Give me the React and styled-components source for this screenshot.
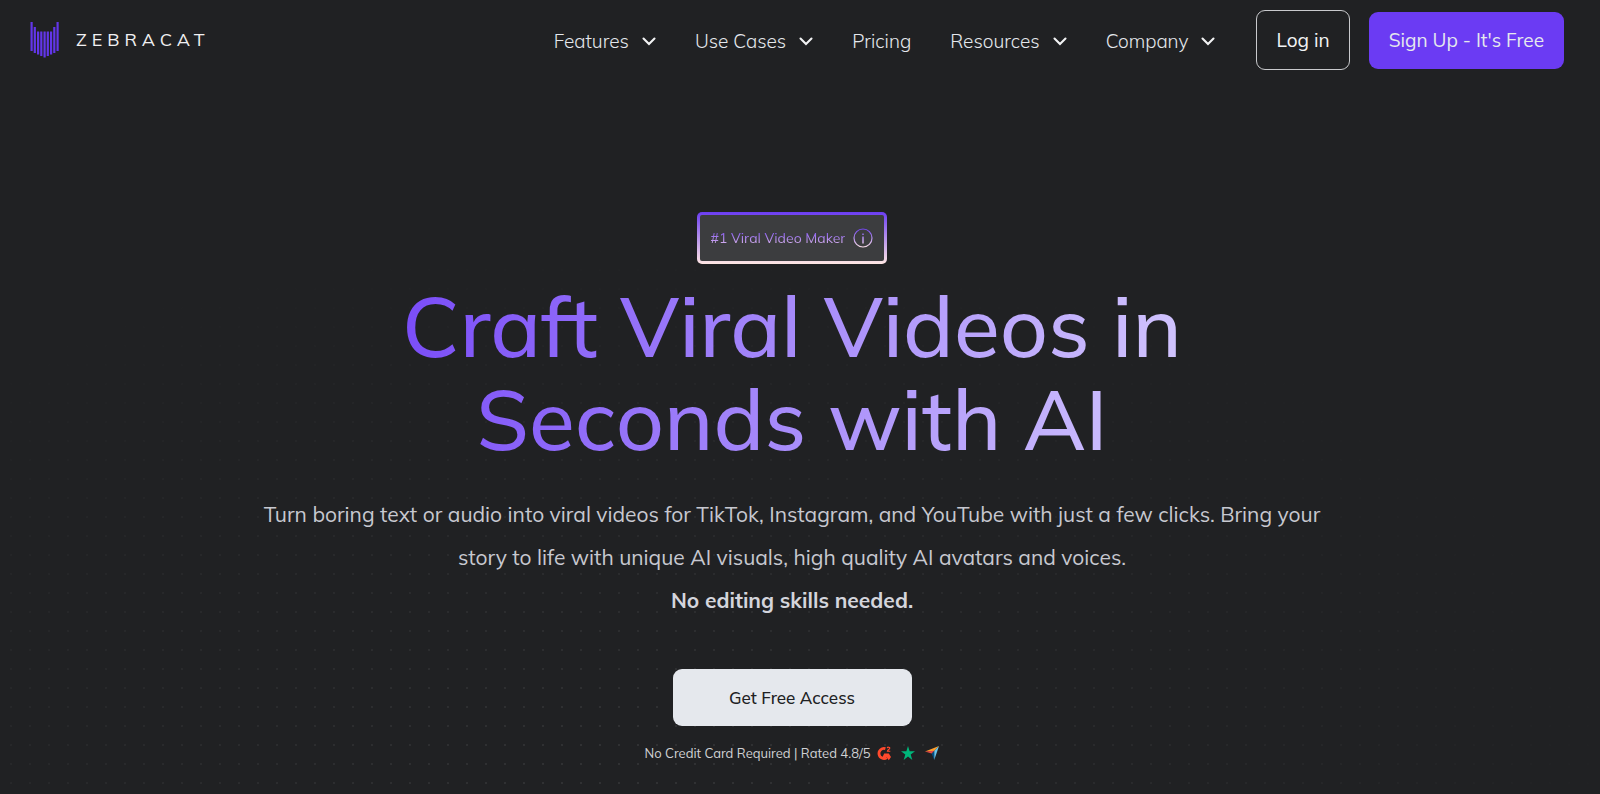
import styled, { createGlobalStyle, css } from 'styled-components'

const navItems = [
    { label: "Features", menu: true },
    { label: "Use Cases", menu: true },
    { label: "Pricing", menu: false },
    { label: "Resources", menu: true },
    { label: "Company", menu: true },
];

// [x, top, bottom] of every stripe of the cat head
const stripes = [
    [0.5, 0, 29], [3.7, 5, 31], [7, 9.5, 32.5], [10.2, 9.5, 34], [13.5, 9.5, 35.5],
    [16.7, 9.5, 34], [20, 9.5, 32.5], [23.2, 5, 31], [26.5, 0, 29],
];

function CatMark() {
    return (
        <svg width="29" height="36" viewBox="0 0 29 36" aria-hidden="true">
            {stripes.map(([x, top, bottom]) => (
                <rect key={x} x={x} y={top} width="2.2" height={bottom - top} fill="#6236e8" />
            ))}
        </svg>
    )
}

function Chevron() {
    return (
        <svg width="14" height="9" viewBox="0 0 14 9" fill="none" aria-hidden="true">
            <path d="M1.5 1.5 7 7l5.500-5.500" stroke="#f2f3f4" strokeWidth="2.100" strokeLinecap="round" />
        </svg>
    )
}

function InfoIcon() {
    return (
        <svg width="20" height="20" viewBox="0 0 20 20" fill="none" aria-hidden="true">
            <defs>
                <linearGradient id="info" gradientUnits="userSpaceOnUse" x1="0" y1="0" x2="0" y2="20">
                    <stop offset="0" stopColor="#6b3df2" />
                    <stop offset="1" stopColor="#fbe0e4" />
                </linearGradient>
            </defs>
            <circle cx="10" cy="10" r="9" stroke="url(#info)" strokeWidth="1.200" />
            <path d="M10 8.500v7M10 5.500v1.500" stroke="url(#info)" strokeWidth="1.500" />
        </svg>
    )
}

function G2Icon() {
    return (
        <svg width="14" height="15" viewBox="0 0 14 15" fill="none" aria-hidden="true">
            <path d="M8.400 2.700A5 5 0 1 0 9.800 11.600" stroke="#ff492c" strokeWidth="2.800" />
            <path d="M7.200 7.600h4.600l2.200 3.500-2.200 3.100-2.300-3.200h-4z" fill="#ff492c" />
            <path d="M10.200 2.100c.2-1.300 2.700-1.200 2.600.1-.1 1.100-2.300 1.500-2.400 3h2.900" stroke="#ff492c" strokeWidth="1.100" />
        </svg>
    )
}

function StarIcon() {
    return (
        <svg width="14" height="14" viewBox="0 0 14 14" aria-hidden="true">
            <path d="M7 0l1.650 5.300H14L9.700 8.500 11.300 14 7 10.500 2.700 14l1.600-5.500L0 5.300h5.350z" fill="#00b67a" />
        </svg>
    )
}

function ArrowIcon() {
    return (
        <svg width="14" height="14" viewBox="0 0 14 14" aria-hidden="true">
            <path d="M0 5.500 9.200 5 14 0z" fill="#ff9d28" />
            <path d="M14 0 9.200 5v9z" fill="#68c5ed" />
            <path d="M9.200 4.800v9.200L6.600 7.400z" fill="#044d80" />
            <path d="M0 5.500 6.600 7.400 9.200 4.800z" fill="#e54747" />
        </svg>
    )
}

export default function App() {
    return (
        <Page>
            <GlobalStyle />
            <Header>
                <Logo href="#home">
                    <CatMark />
                    <span>ZEBRACAT</span>
                </Logo>
                <Nav>
                    {navItems.map(({ label, menu }) => (
                        menu
                            ? <NavButton key={label} type="button">{label}<Chevron /></NavButton>
                            : <NavLink key={label} href="#pricing">{label}</NavLink>
                    ))}
                </Nav>
                <Actions>
                    <LogIn href="#login">Log in</LogIn>
                    <SignUp href="#signup">Sign Up - It's Free</SignUp>
                </Actions>
            </Header>
            <Hero>
                <Badge>
                    <span>#1 Viral Video Maker</span>
                    <InfoIcon />
                </Badge>
                <Title>Craft Viral Videos in Seconds with AI</Title>
                <Lead>
                    Turn boring text or audio into viral videos for TikTok, Instagram, and YouTube with just a few clicks. Bring your story to life with unique AI visuals, high quality AI avatars and voices.
                    <strong>No editing skills needed.</strong>
                </Lead>
                <Access type="button">Get Free Access</Access>
                <Note>
                    <span>No Credit Card Required | Rated 4.8/5</span>
                    <Ratings>
                        <G2Icon />
                        <StarIcon />
                        <ArrowIcon />
                    </Ratings>
                </Note>
            </Hero>
        </Page>
    )
}

const GlobalStyle = createGlobalStyle`
    * {
        box-sizing: border-box;
    }

    body {
        margin: 0;
        background: #202123;
        font-family: 'Mulish', 'Lato', sans-serif;
    }
`

const Page = styled.div`
    min-height: 100vh;
    padding-right: 16px;
    background:
        radial-gradient(ellipse 1000px 560px at 40% 100%, transparent 10%, #202123 100%),
        radial-gradient(circle at 2px 2px, #303133 1px, transparent 1px) 9px 2px / 19px 19px,
        #202123;
`

const Header = styled.header`
    display: flex;
    align-items: center;
    padding: 10px 20px 10px 30px;
`

const Logo = styled.a`
    display: flex;
    align-items: center;
    gap: 17px;
    margin-right: auto;
    color: #f0f0f2;
    font-size: 18px;
    line-height: 24px;
    letter-spacing: 5px;
    text-decoration: none;
`

const Nav = styled.nav`
    display: flex;
    align-items: center;
    gap: 39px;
    margin-right: 41px;
    padding-top: 2px;
`

const navText = css`
    font-family: inherit;
    font-size: 19px;
    font-weight: 300;
    line-height: 25px;
    color: #e5e8ed;
    text-decoration: none;
`

const NavLink = styled.a`
    ${navText}
`

const NavButton = styled.button`
    ${navText}
    display: flex;
    align-items: center;
    gap: 13px;
    padding: 0;
    border: none;
    background: none;
`

const Actions = styled.div`
    display: flex;
    align-items: center;
    gap: 19px;
`

const LogIn = styled.a`
    padding: 17px 19px 16px;
    border: 1px solid #c9cacd;
    border-radius: 9px;
    color: #f2f3f5;
    font-size: 19px;
    line-height: 25px;
    text-decoration: none;
`

const SignUp = styled.a`
    padding: 16px 20px;
    border-radius: 9px;
    background: #6b3bf3;
    color: #e5e8ed;
    font-size: 19px;
    line-height: 25px;
    text-decoration: none;
`

const Hero = styled.main`
    display: flex;
    flex-direction: column;
    align-items: center;
    padding: 132px 24px 32px;
    text-align: center;
`

const Badge = styled.div`
    display: flex;
    align-items: center;
    gap: 8px;
    padding: 13px 11px;
    border: 3px solid transparent;
    border-radius: 5px;
    background:
        linear-gradient(#3c3d3f, #3c3d3f) padding-box,
        linear-gradient(#6b3df2, #ffe6e4) border-box;

    span {
        background: linear-gradient(#6b3df2, #f0cdec);
        background-clip: text;
        color: transparent;
        font-size: 14px;
        line-height: 20px;
    }
`

const Title = styled.h1`
    max-width: 840px;
    margin: 15px 0 28px;
    background: linear-gradient(100deg, #7647f8, #a78bfa 50%, #d6cbfe);
    background-clip: text;
    color: transparent;
    font-size: 84px;
    font-weight: 500;
    line-height: 93px;
`

const Lead = styled.p`
    max-width: 1100px;
    margin: 0 0 47px;
    color: #c7c8d0;
    font-size: 21px;
    line-height: 43px;

    strong {
        display: block;
        color: #d4d5dc;
    }
`

const Access = styled.button`
    width: 239px;
    padding: 16px;
    border: none;
    border-radius: 9px;
    background: #e5e8ed;
    color: #202123;
    font-family: inherit;
    font-size: 17px;
    font-weight: 500;
    line-height: 25px;
`

const Note = styled.div`
    display: flex;
    align-items: center;
    gap: 7px;
    margin-top: 17px;
    color: #d0d1d4;
    font-size: 13px;
    line-height: 20px;
`

const Ratings = styled.div`
    display: flex;
    align-items: center;
    gap: 10px;
`
